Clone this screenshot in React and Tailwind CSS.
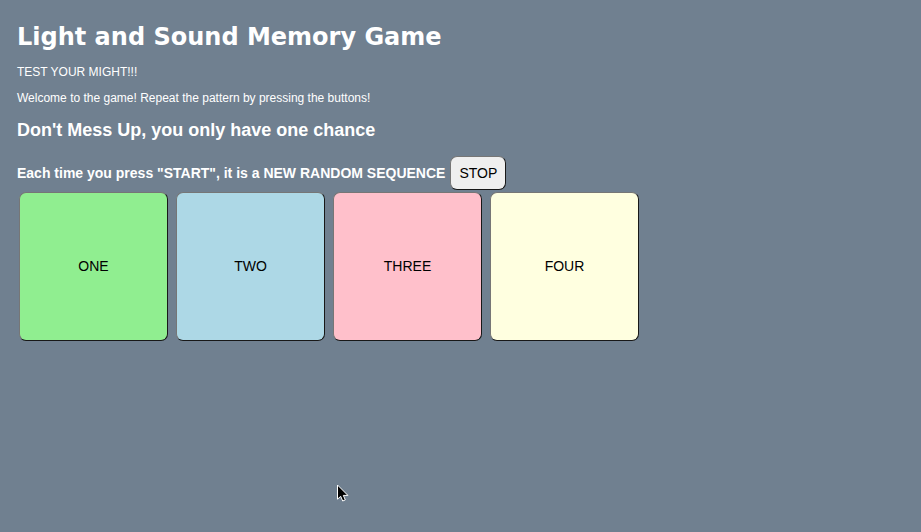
const pads = [
  { label: 'ONE', color: 'bg-[#90ee90]' },
  { label: 'TWO', color: 'bg-[#add8e6]' },
  { label: 'THREE', color: 'bg-[#ffc0cb]' },
  { label: 'FOUR', color: 'bg-[#ffffe0]' },
];

const buttonBase =
  'shrink-0 rounded-[7px] border border-t-[#767676] border-l-[#767676] border-r-[#181818] border-b-[#181818] text-[14px] text-black';

export default function App() {
  return (
    <main className="relative min-h-screen bg-[#708090] px-[17px] pt-[21px] font-['Liberation_Sans',Arial,sans-serif] text-white">
      <h1 className="font-['DejaVu_Sans',Verdana,sans-serif] text-[24px] leading-8 font-bold">
        Light and Sound Memory Game
      </h1>
      <p className="mt-[11px] text-[12px] leading-4">TEST YOUR MIGHT!!!</p>
      <p className="mt-[10px] text-[12px] leading-4">
        Welcome to the game! Repeat the pattern by pressing the buttons!
      </p>
      <h2 className="mt-3 text-[18px] leading-6 font-bold">
        Don't Mess Up, you only have one chance
      </h2>
      <div className="mt-[14px] flex items-center gap-[5px]">
        <h3 className="text-[14px] leading-5 font-bold">
          Each time you press "START", it is a NEW RANDOM SEQUENCE
        </h3>
        <button type="button" className={buttonBase + ' h-[34px] w-[56px] bg-[#efefef]'}>
          STOP
        </button>
      </div>
      <div className="mt-[2px] ml-[2px] flex flex-wrap gap-2">
        {pads.map((pad) => (
          <button
            key={pad.label}
            type="button"
            className={buttonBase + ' h-[149px] w-[149px] ' + pad.color}
          >
            {pad.label}
          </button>
        ))}
      </div>
      <svg className="absolute top-[484px] left-[336px] h-[19px] w-[13px]" viewBox="0 0 13 19" aria-hidden="true">
        <path
          d="M1.5 1v14.2l3.2-2.9 2 4.7 2.6-1.1-2-4.5h4.6z"
          fill="#000"
          stroke="#fff"
          strokeWidth="1"
        />
      </svg>
    </main>
  );
}
